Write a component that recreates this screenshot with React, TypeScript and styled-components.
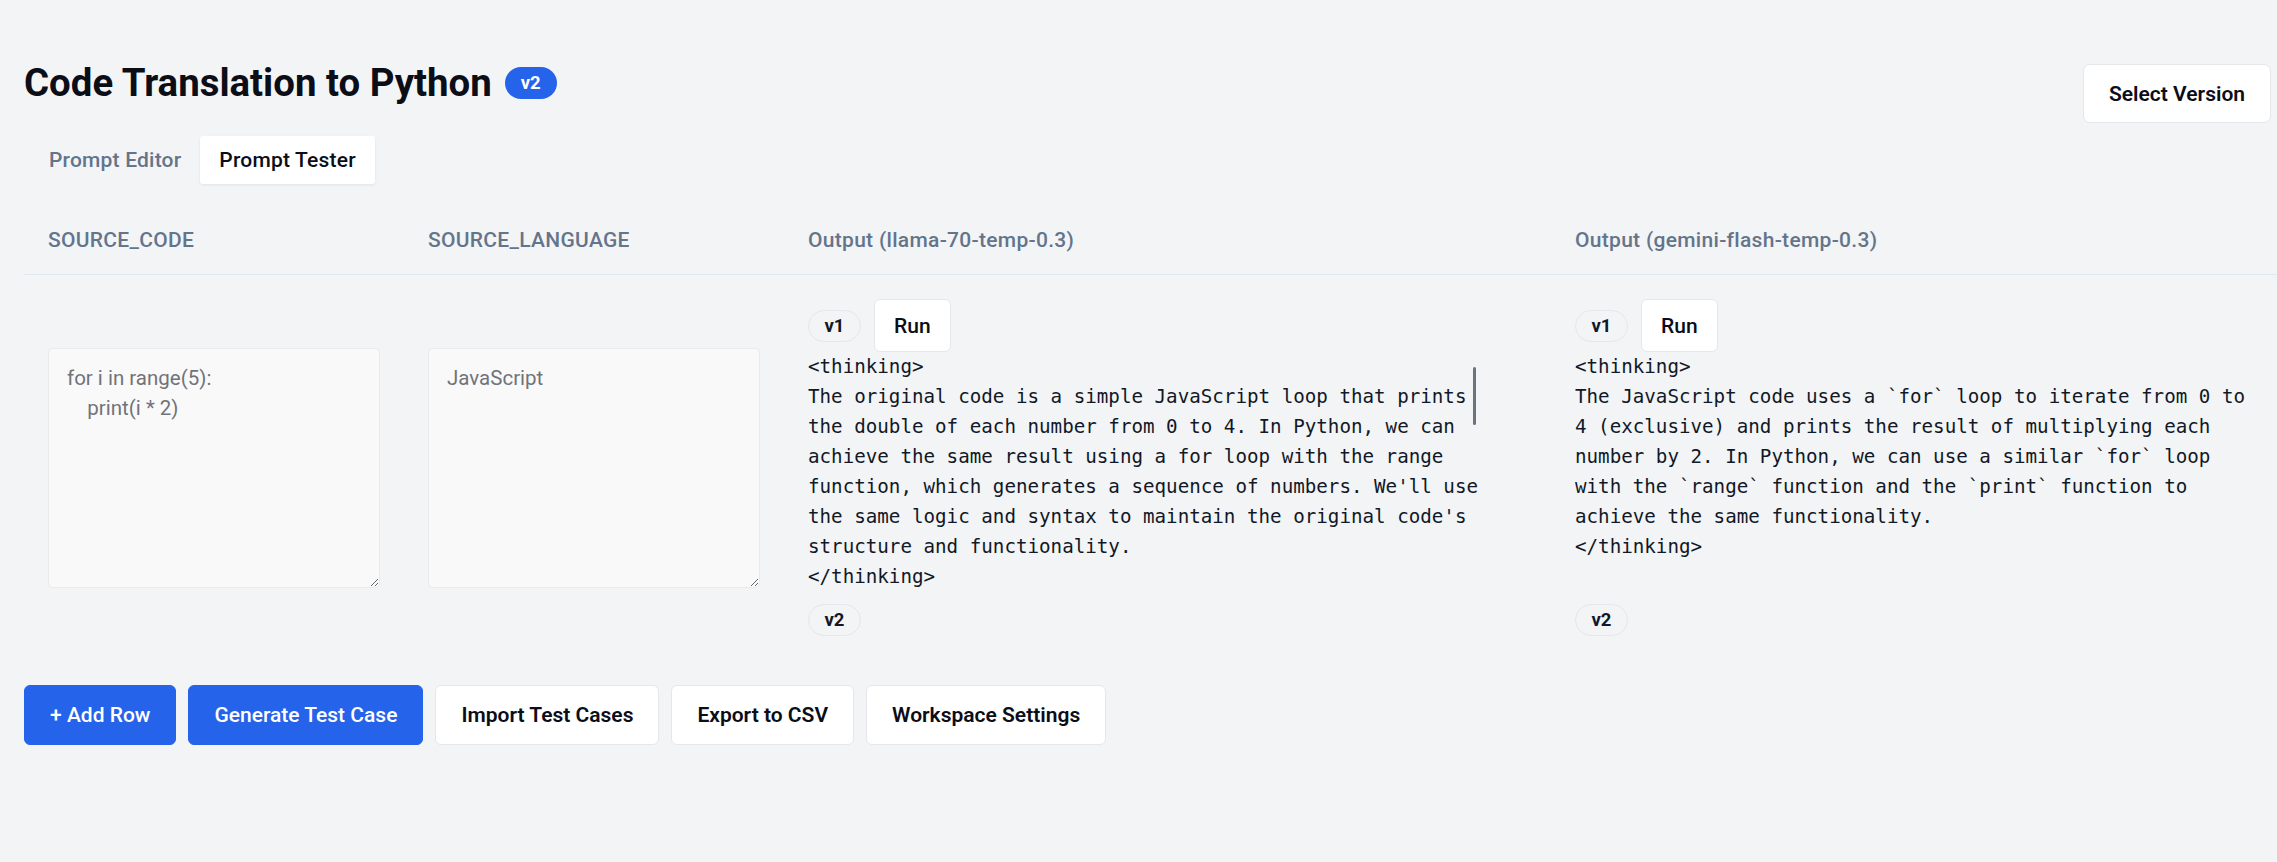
import * as React from "react";
import styled, { createGlobalStyle } from "styled-components";

const GlobalStyle = createGlobalStyle`
  html, body {
    margin: 0;
    padding: 0;
    background: #f3f4f6;
  }
  body {
    font-family: Roboto, "Liberation Sans", sans-serif;
    color: #0b0d17;
  }
  * {
    box-sizing: border-box;
  }
`;

const Page = styled.div`
  min-height: 862px;
  padding: 0 6px 40px 24px;
  overflow: hidden;
`;

const Header = styled.header`
  display: flex;
  justify-content: space-between;
  align-items: flex-start;
  padding-top: 60px;
`;

const TitleRow = styled.div`
  display: flex;
  align-items: center;
  gap: 13px;
`;

const Title = styled.h1`
  margin: 0;
  font-size: 38.4px;
  line-height: 45px;
  font-weight: 700;
  color: #0b0d17;
`;

const VersionBadge = styled.span`
  display: inline-flex;
  align-items: center;
  justify-content: center;
  height: 32px;
  padding: 0 16px;
  border-radius: 16px;
  background: #2563eb;
  color: #fff;
  font-size: 18.5px;
  font-weight: 700;
`;

const SelectButton = styled.button`
  margin-top: 4px;
  height: 59px;
  padding: 0 25px;
  background: #fff;
  border: 1px solid #e5e7eb;
  border-radius: 7px;
  font: 600 21px Roboto, sans-serif;
  color: #0b0d17;
`;

const TabList = styled.div`
  display: flex;
  margin-top: 31px;
  padding-left: 6px;
`;

const Tab = styled.button<{ $active?: boolean }>`
  height: 48px;
  padding: 0 19px;
  border: 0;
  border-radius: 3px;
  font: 500 21px/28px Roboto, sans-serif;
  letter-spacing: 0.2px;
  background: ${(p) => (p.$active ? "#fff" : "transparent")};
  color: ${(p) => (p.$active ? "#0b0d17" : "#64748b")};
  box-shadow: ${(p) => (p.$active ? "0 1px 3px rgba(15, 23, 42, 0.08)" : "none")};
`;

const Table = styled.div`
  margin-top: 22px;
  margin-right: -6px;
  display: grid;
  grid-template-columns: 380px 380px 767px 1fr;
`;

const HeadCell = styled.div`
  padding: 20px 24px;
  font: 500 21px/28px Roboto, sans-serif;
  letter-spacing: 0.3px;
  color: #64748b;
  border-bottom: 1px solid #e2e8f0;
  white-space: nowrap;
`;

const Cell = styled.div<{ $top?: boolean }>`
  padding: 24px;
  display: flex;
  flex-direction: column;
  justify-content: ${(p) => (p.$top ? "flex-start" : "center")};
  align-items: flex-start;
`;

const Field = styled.textarea`
  width: 100%;
  height: 240px;
  padding: 14px 18px;
  border: 1px solid #eaeaec;
  border-radius: 4px;
  background: #f9f9fa;
  font: 400 20.5px/30px Roboto, sans-serif;
  color: #727378;
  resize: vertical;
  outline: none;
`;

const Controls = styled.div`
  display: flex;
  align-items: center;
  gap: 13px;
`;

const Pill = styled.span`
  display: inline-flex;
  align-items: center;
  justify-content: center;
  height: 32px;
  width: 53px;
  border: 1px solid #e5e7eb;
  border-radius: 16px;
  font: 700 18.5px Roboto, sans-serif;
  color: #111827;
`;

const NextPill = styled(Pill)`
  margin-top: 12px;
`;

const RunButton = styled.button`
  height: 53px;
  padding: 0 19px;
  background: #fff;
  border: 1px solid #e5e7eb;
  border-radius: 6px;
  font: 500 21px Roboto, sans-serif;
  color: #0b0d17;
`;

const OutputBox = styled.div`
  position: relative;
  width: 672px;
  height: 240px;
  overflow: hidden;
`;

const OutputText = styled.pre`
  margin: 0;
  font: 400 19.2px/30px "DejaVu Sans Mono", "Liberation Mono", monospace;
  color: #111827;
  white-space: pre;
`;

const ScrollThumb = styled.div`
  position: absolute;
  right: 4px;
  top: 15px;
  width: 3px;
  height: 58px;
  border-radius: 2px;
  background: #6b7280;
`;

const Actions = styled.div`
  display: flex;
  gap: 12px;
  margin-top: 25px;
`;

const ActionButton = styled.button<{ $primary?: boolean }>`
  height: 60px;
  padding: 0 25px;
  border-radius: 6px;
  font: ${(p) => (p.$primary ? 500 : 600)} 21px Roboto, sans-serif;
  border: 1px solid ${(p) => (p.$primary ? "#2563eb" : "#e5e7eb")};
  background: ${(p) => (p.$primary ? "#2563eb" : "#fff")};
  color: ${(p) => (p.$primary ? "#fff" : "#0b0d17")};
`;

const llamaOutput = `<thinking>
The original code is a simple JavaScript loop that prints
the double of each number from 0 to 4. In Python, we can
achieve the same result using a for loop with the range
function, which generates a sequence of numbers. We'll use
the same logic and syntax to maintain the original code's
structure and functionality.
</thinking>`;

const geminiOutput = `<thinking>
The JavaScript code uses a \`for\` loop to iterate from 0 to
4 (exclusive) and prints the result of multiplying each
number by 2. In Python, we can use a similar \`for\` loop
with the \`range\` function and the \`print\` function to
achieve the same functionality.
</thinking>`;

const outputs = [
  { model: "llama-70-temp-0.3", text: llamaOutput, scrolled: true },
  { model: "gemini-flash-temp-0.3", text: geminiOutput, scrolled: false },
];

export default function App() {
  return (
    <Page>
      <GlobalStyle />
      <Header>
        <div>
          <TitleRow>
            <Title>Code Translation to Python</Title>
            <VersionBadge>v2</VersionBadge>
          </TitleRow>
          <TabList>
            <Tab>Prompt Editor</Tab>
            <Tab $active>Prompt Tester</Tab>
          </TabList>
        </div>
        <SelectButton>Select Version</SelectButton>
      </Header>

      <Table>
        <HeadCell>SOURCE_CODE</HeadCell>
        <HeadCell>SOURCE_LANGUAGE</HeadCell>
        {outputs.map((o) => (
          <HeadCell key={o.model}>Output ({o.model})</HeadCell>
        ))}

        <Cell>
          <Field defaultValue={"for i in range(5):\n    print(i * 2)"} />
        </Cell>
        <Cell>
          <Field defaultValue="JavaScript" />
        </Cell>
        {outputs.map((o) => (
          <Cell $top key={o.model}>
            <Controls>
              <Pill>v1</Pill>
              <RunButton>Run</RunButton>
            </Controls>
            <OutputBox>
              <OutputText>{o.text}</OutputText>
              {o.scrolled && <ScrollThumb />}
            </OutputBox>
            <NextPill>v2</NextPill>
          </Cell>
        ))}
      </Table>

      <Actions>
        <ActionButton $primary>+ Add Row</ActionButton>
        <ActionButton $primary>Generate Test Case</ActionButton>
        <ActionButton>Import Test Cases</ActionButton>
        <ActionButton>Export to CSV</ActionButton>
        <ActionButton>Workspace Settings</ActionButton>
      </Actions>
    </Page>
  );
}
